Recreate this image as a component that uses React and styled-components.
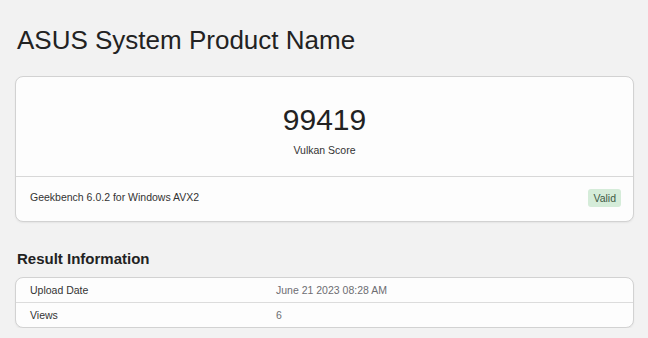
import React from "react";
import styled, { createGlobalStyle } from "styled-components";

const Global = createGlobalStyle`
  html, body { margin: 0; padding: 0; background: #f2f2f2; }
  body { font-family: "Liberation Sans", Arial, sans-serif; color: #222; }
`;

const Page = styled.div`
  padding: 0 14px 0 15px;
  display: flex;
  flex-direction: column;
`;

const Title = styled.h1`
  margin: 24px 0 0 2px;
  font-size: 26px;
  font-weight: 400;
  line-height: 32px;
  color: #222;
`;

const Card = styled.div`
  margin-top: ${(p) => p.$mt || 0}px;
  background: #fdfdfd;
  border: 1px solid #d2d2d2;
  border-radius: 8px;
  box-shadow: 0 1px 2px rgba(0, 0, 0, 0.06);
  overflow: hidden;
`;

const ScoreBox = styled.div`
  display: flex;
  flex-direction: column;
  align-items: center;
  padding: 25px 0 19px;
  border-bottom: 1px solid #d8d8d8;
`;

const Score = styled.div`
  font-size: 30px;
  line-height: 36px;
  color: #222;
`;

const ScoreLabel = styled.div`
  margin-top: 5px;
  font-size: 10.5px;
  line-height: 14px;
  color: #333;
`;

const Footer = styled.div`
  display: flex;
  justify-content: space-between;
  align-items: flex-start;
  padding: 13px 12px 14px 14px;
  font-size: 10.5px;
  color: #333;
`;

const FooterText = styled.span`
  line-height: 14px;
`;

const Badge = styled.span`
  background: #d5ecd9;
  color: #3e5a45;
  border-radius: 3px;
  padding: 3px 5px;
  font-size: 10.5px;
  line-height: 12px;
  margin-top: -1px;
`;

const Section = styled.h2`
  margin: 28px 0 0 2px;
  font-size: 15px;
  font-weight: 700;
  line-height: 18px;
  color: #222;
`;

const Row = styled.div`
  display: grid;
  grid-template-columns: 246px 1fr;
  padding: 0 14px;
  height: 24px;
  align-items: center;
  font-size: 10.5px;
  & + & {
    border-top: 1px solid #dcdcdc;
  }
`;

const Key = styled.span`
  color: #333;
`;

const Value = styled.span`
  color: #6d6d72;
`;

export default function App() {
  return (
    <>
      <Global />
      <Page>
        <Title>ASUS System Product Name</Title>
        <Card $mt={20}>
          <ScoreBox>
            <Score>99419</Score>
            <ScoreLabel>Vulkan Score</ScoreLabel>
          </ScoreBox>
          <Footer>
            <FooterText>Geekbench 6.0.2 for Windows AVX2</FooterText>
            <Badge>Valid</Badge>
          </Footer>
        </Card>
        <Section>Result Information</Section>
        <Card $mt={9}>
          <Row>
            <Key>Upload Date</Key>
            <Value>June 21 2023 08:28 AM</Value>
          </Row>
          <Row>
            <Key>Views</Key>
            <Value>6</Value>
          </Row>
        </Card>
      </Page>
    </>
  );
}
